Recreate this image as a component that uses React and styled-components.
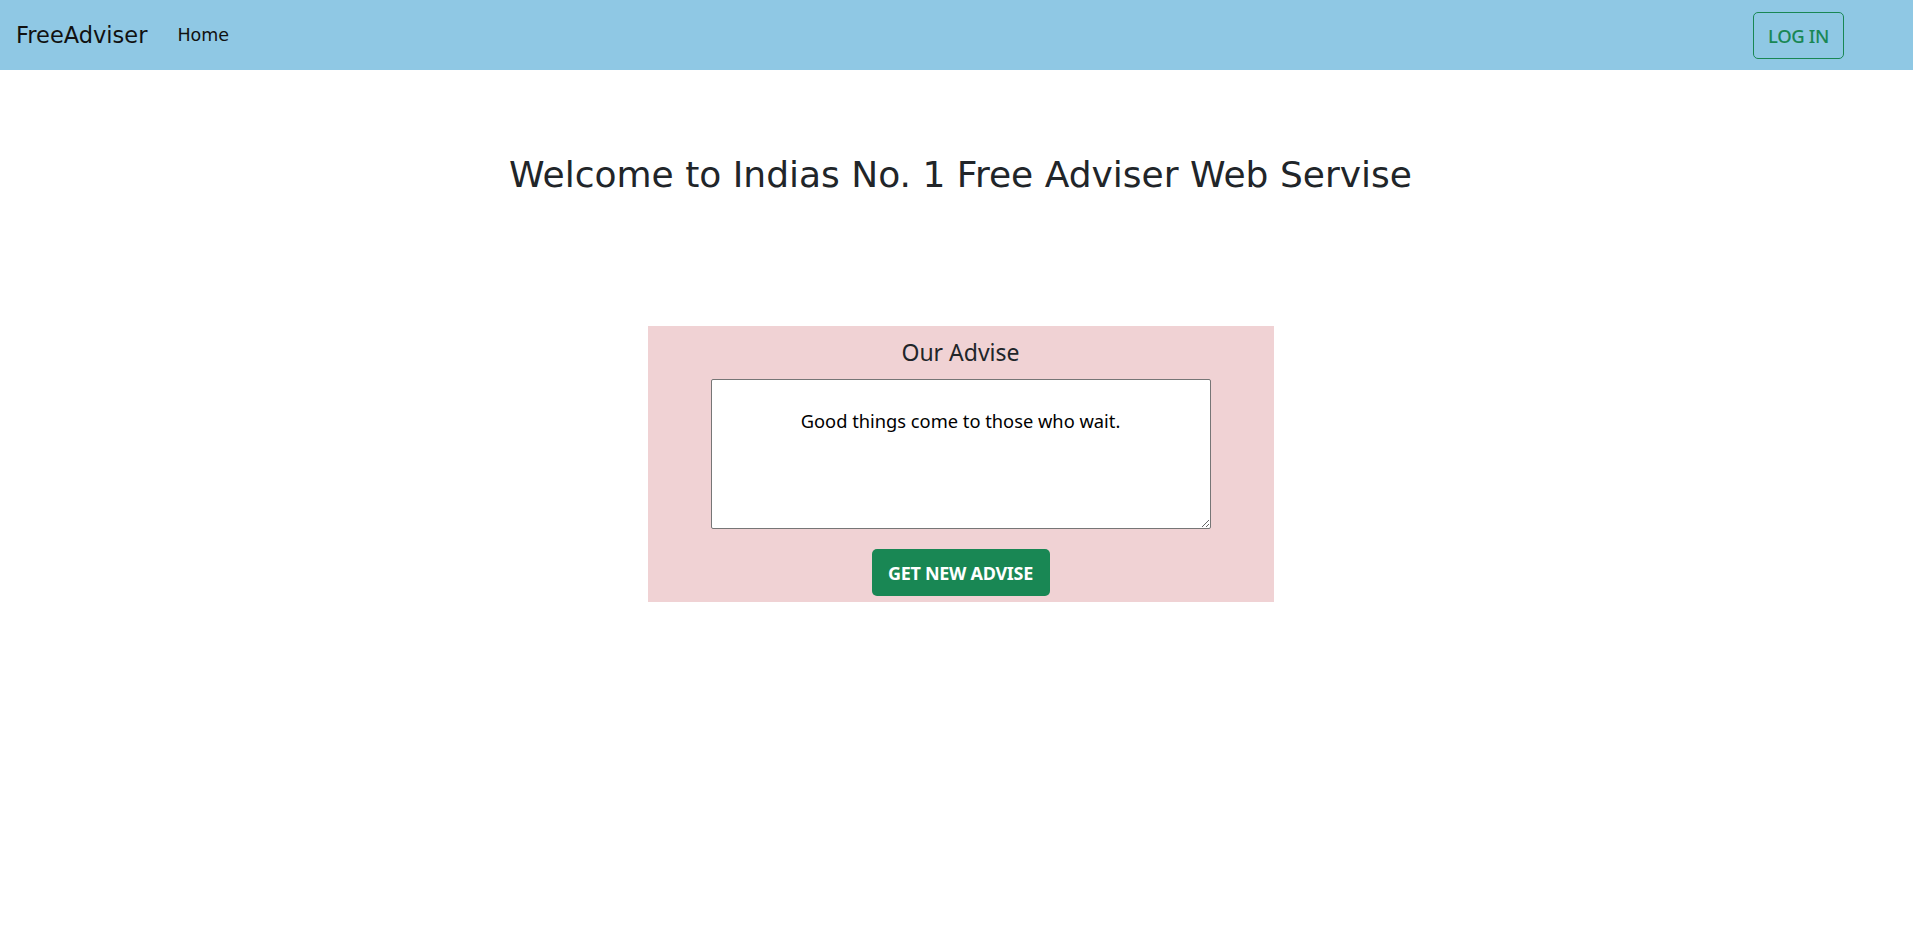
import React from "react";
import styled, { createGlobalStyle } from "styled-components";

const Global = createGlobalStyle`
  * { box-sizing: border-box; }
  html, body { margin: 0; padding: 0; background: #fff; }
  body { font-family: "Noto Sans", "Open Sans", sans-serif; color: #212529; }
`;

const Navbar = styled.nav`
  height: 70px;
  background: #8fc8e4;
  display: flex;
  align-items: center;
  padding: 0 69px 0 16px;
`;

const Brand = styled.a`
  font-family: "DejaVu Sans", sans-serif;
  font-size: 22.5px;
  color: #111;
  text-decoration: none;
  margin-right: 30px;
`;

const NavLink = styled.a`
  font-family: "DejaVu Sans", sans-serif;
  font-size: 17.5px;
  color: #111;
  text-decoration: none;
`;

const Spacer = styled.div`
  flex: 1;
`;

const OutlineButton = styled.button`
  width: 91px;
  height: 47px;
  border: 1px solid #198754;
  border-radius: 5px;
  background: transparent;
  color: #198754;
  font-family: "Noto Sans", sans-serif;
  font-weight: 500;
  font-size: 18.5px;
  letter-spacing: -0.4px;
  padding: 0;
  cursor: pointer;
`;

const Main = styled.main`
  display: flex;
  flex-direction: column;
  align-items: center;
  padding-left: 8px;
`;

const Title = styled.h1`
  margin: 81px 0 0;
  font-family: "DejaVu Sans", sans-serif;
  font-weight: 400;
  font-size: 36px;
  line-height: 48px;
  color: #212529;
`;

const Card = styled.section`
  margin-top: 127px;
  width: 626px;
  background: #f0d2d4;
  display: flex;
  flex-direction: column;
  align-items: center;
  padding: 10px 0 6px;
`;

const CardTitle = styled.h2`
  margin: 0 0 10px;
  font-family: "Noto Sans", sans-serif;
  font-weight: 400;
  font-size: 23px;
  line-height: 33px;
  color: #212529;
`;

const AdviceBox = styled.textarea`
  width: 500px;
  height: 150px;
  border: 1px solid #767676;
  border-radius: 2px;
  background: #fff;
  padding: 28px 10px 0;
  text-align: center;
  font-family: "Noto Sans", sans-serif;
  font-size: 18.3px;
  color: #000;
  resize: both;
  outline: none;
`;

const SolidButton = styled.button`
  margin-top: 20px;
  width: 178px;
  height: 47px;
  border: none;
  border-radius: 5px;
  background: #198754;
  color: #fff;
  font-family: "Noto Sans", sans-serif;
  font-weight: 700;
  font-size: 18px;
  letter-spacing: -0.3px;
  padding: 0;
  cursor: pointer;
`;

export default function App() {
  return (
    <>
      <Global />
      <Navbar>
        <Brand href="#">FreeAdviser</Brand>
        <NavLink href="#">Home</NavLink>
        <Spacer />
        <OutlineButton>LOG IN</OutlineButton>
      </Navbar>
      <Main>
        <Title>Welcome to Indias No. 1 Free Adviser Web Servise</Title>
        <Card>
          <CardTitle>Our Advise</CardTitle>
          <AdviceBox readOnly value="Good things come to those who wait." />
          <SolidButton>GET NEW ADVISE</SolidButton>
        </Card>
      </Main>
    </>
  );
}
